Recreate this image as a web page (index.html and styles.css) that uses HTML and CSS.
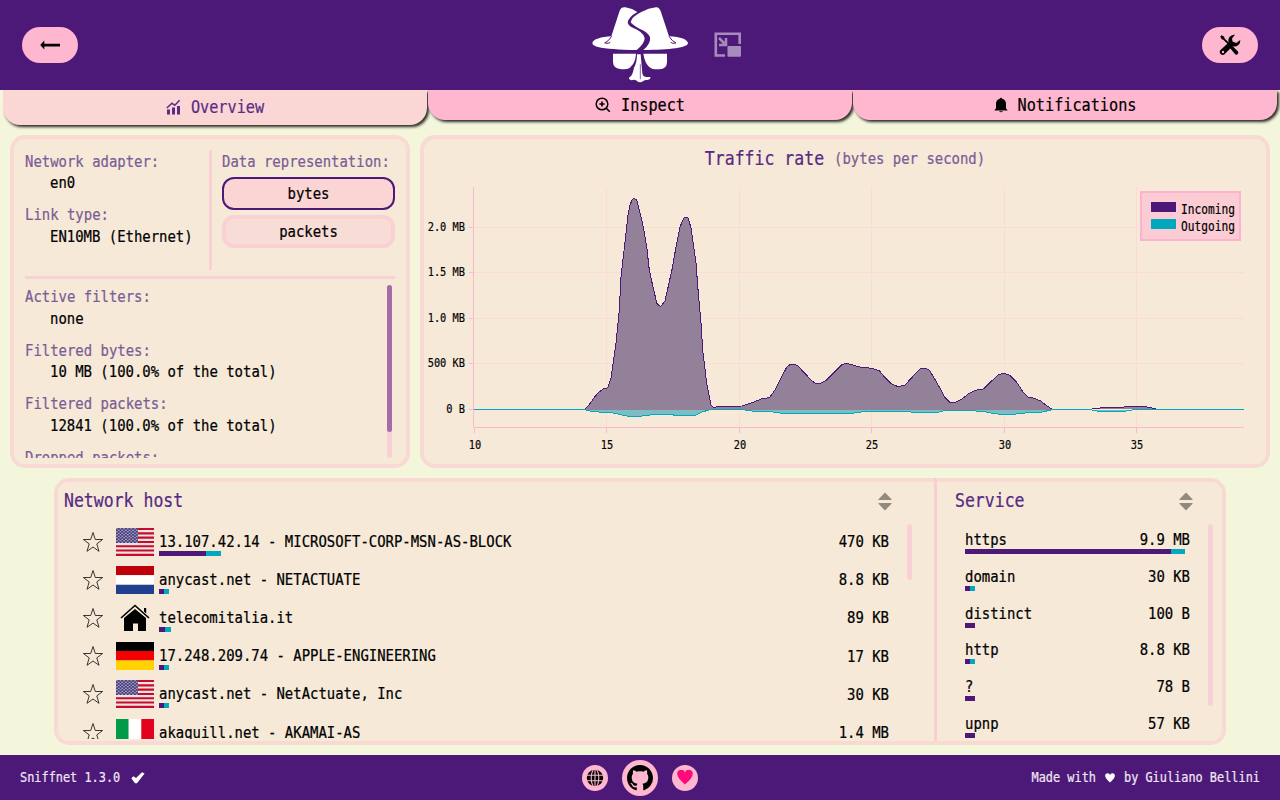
FILE: index.html
```html
<!DOCTYPE html>
<html lang="en">
<head>
<meta charset="utf-8">
<title>Sniffnet</title>
<link rel="stylesheet" href="styles.css">
</head>
<body>
<svg class="defs" width="0" height="0" aria-hidden="true">
  <defs>
    <pattern id="stars" width="3.6" height="3" patternUnits="userSpaceOnUse">
      <rect width="3.6" height="3" fill="#443a80"/>
      <circle cx="0.9" cy="0.8" r="0.75" fill="#c9c4cc"/>
      <circle cx="2.7" cy="2.3" r="0.75" fill="#c9c4cc"/>
    </pattern>
    <symbol id="us" viewBox="0 0 38 28">
      <rect width="38" height="28" fill="#ece6e2"/>
      <path stroke="#c90a2c" stroke-width="2.1" d="M0 1.05H38M0 5.35H38M0 9.65H38M0 13.95H38M0 18.25H38M0 22.55H38M0 26.9H38"/>
      <rect width="22" height="15" fill="url(#stars)"/>
    </symbol>
    <symbol id="star" viewBox="0 0 22 22">
      <path d="M11 1.5 13.3 8.5H20.6L14.8 12.9 17 20.3 11 16 5 20.3 7.2 12.9 1.4 8.5H8.7Z" fill="none" stroke="#222" stroke-width="0.9"/>
    </symbol>
    <symbol id="sort" viewBox="0 0 14 19">
      <path d="M7 .5 13.5 7.300V8H.5V7.300ZM7 18.500 13.500 11.700V11H.5V11.700Z" fill="#92897f"/>
    </symbol>
  </defs>
</svg>
<div class="app">
  <header class="header">
    <div class="pill">
      <svg width="22" height="12" viewBox="0 0 22 12"><path d="M1.2 6 5.3 1.6V4.7H21V7.5H5.3V10.4Z"/></svg>
    </div>
    <div class="brand">
      <svg class="logo" viewBox="90 20 300 235">
        <g fill="#fff">
          <path d="M97 132C97 120 125 112 154 111L179 34Q184 22 196 24Q218 28 232 38Q204 54 203 70Q206 80 220 86Q250 98 254 116Q254 132 230 152Q150 151 114 143Q97 139 97 132Z"/>
          <path d="M250 152Q274 132 270 114Q265 99 240 89Q216 76 212 68Q215 52 244 38Q266 26 288 24Q298 23 303 38L327 111C362 113 384 121 384 132C384 145 330 152 250 152Z"/>
          <path d="M159 163H228Q226 190 214 200Q208 210 193 210H184Q159 208 159 188Z"/>
          <path d="M250 163H321V188Q321 210 298 210H285Q257 207 250 163Z"/>
          <path d="M231 165H242L247 222Q249 235 263 233L271 233Q273 240 262 242Q254 241 249 246Q239 252 230 244Q223 239 215 243Q204 240 208 234Q218 230 222 205Q231 190 231 165Z"/>
        </g>
        <g fill="none" stroke="#4d1979">
          <path d="M155 111Q146 126 134 131Q146 134 151 129" stroke-width="3"/>
          <path d="M327 111Q336 126 348 131Q337 134 332 129" stroke-width="3"/>
          <path d="M241 195V240" stroke-width="2"/>
        </g>
      </svg>
      <svg class="pip" width="28" height="26" viewBox="0 0 28 26">
        <path d="M11 23.5H1.8V1.8H25.7V12" fill="none" stroke="#a68bbc" stroke-width="2.600"/>
        <path d="M5 6 10.500 11.500M12 6V13H5" fill="none" stroke="#a68bbc" stroke-width="2.500"/>
        <rect x="13.5" y="14" width="13.500" height="10.800" rx="1" fill="#a68bbc"/>
      </svg>
    </div>
    <div class="pill">
      <svg width="22" height="22" viewBox="0 0 22 22">
        <path d="M1.2 2.5 2.7 1.2 5.2 2.8 5.6 4.5 18.8 17.3A2 2 0 0 1 16.2 20.3L11 14 10.8 12 4.3 5.8 2.8 5.3Z"/>
        <path d="M16 .8A5.8 5.8 0 0 0 9.7 8.5L1.8 15.8A2.9 2.9 0 0 0 5.8 20.1L13.5 12.2A5.8 5.8 0 0 0 21.2 6L17.3 9 13.5 7.5 13 4.5Z"/>
        <circle cx="4" cy="18" r="1.2" fill="#ffb6cf"/>
      </svg>
    </div>
  </header>

  <nav class="tabs">
    <div class="tab active">
      <svg width="15" height="16" viewBox="0 0 15 16"><path d="M1 15.5V10.5H4V15.5ZM6 15.5V8.5H9V15.5ZM11 15.5V7H14V15.5Z" fill="#5a2d84"/><path d="M.8 9 6 4.3 8.8 6.3 13.6 1.2" fill="none" stroke="#5a2d84" stroke-width="1.5"/></svg>
      <span class="txt">Overview</span>
    </div>
    <div class="tab">
      <svg width="16" height="16" viewBox="0 0 16 16"><circle cx="7" cy="7" r="5.8" fill="none" stroke="#000" stroke-width="1.5"/><path d="M4.4 7H9.6M7 4.4V9.6M11 11 14.8 14.8" stroke="#000" stroke-width="1.6"/></svg>
      <span class="txt">Inspect</span>
    </div>
    <div class="tab">
      <svg width="14" height="16" viewBox="0 0 14 16"><path d="M7 .5 8.3 1.7C11 2.5 12 4.5 12 7V11.2L13.7 13.500H.3L2 11.2V7C2 4.500 3 2.500 5.700 1.700ZM5 14.300H9Q7 16.200 5 14.300Z"/></svg>
      <span class="txt">Notifications</span>
    </div>
  </nav>

  <main class="main">
    <div class="top-row">
      <section class="panel info">
        <div class="info-top">
          <dl class="facts adapter">
            <dt class="txt">Network adapter:</dt><dd class="txt">en0</dd>
            <dt class="txt">Link type:</dt><dd class="txt">EN10MB (Ethernet)</dd>
          </dl>
          <div class="repr">
            <div class="txt label">Data representation:</div>
            <div class="choice chosen"><span class="txt">bytes</span></div>
            <div class="choice"><span class="txt">packets</span></div>
          </div>
        </div>
        <div class="info-bottom">
          <dl class="facts">
            <dt class="txt">Active filters:</dt><dd class="txt">none</dd>
            <dt class="txt">Filtered bytes:</dt><dd class="txt">10 MB (100.0% of the total)</dd>
            <dt class="txt">Filtered packets:</dt><dd class="txt">12841 (100.0% of the total)</dd>
            <dt class="txt">Dropped packets:</dt>
          </dl>
          <div class="track"><div class="thumb"></div></div>
        </div>
      </section>

      <section class="panel chart">
        <div class="chart-title"><span class="txt title">Traffic rate</span><span class="txt label">(bytes per second)</span></div>
        <svg width="842" height="286" viewBox="424 178 842 286">
          <g stroke="#fadbd6" stroke-width="1" shape-rendering="crispEdges">
            <path d="M474 227.5H1244M474 272.500H1244M474 318.500H1244M474 363.500H1244M606.500 187V427M739.500 187V427M871.500 187V427M1004.500 187V427M1136.500 187V427"/>
          </g>
          <g stroke="#ffb6cf" stroke-width="1" shape-rendering="crispEdges">
            <path d="M473.500 187V427M474 427.500H1244M469 227.500H474M469 272.500H474M469 318.500H474M469 363.500H474M469 409.500H474M474.500 428V433M606.500 428V433M739.500 428V433M871.500 428V433M1004.500 428V433M1136.500 428V433"/>
          </g>
          <g class="area" shape-rendering="crispEdges">
            <path class="incoming" d="M584.300 409.500 588.300 405.700 595.700 395.700 599 392 603.300 389 607.700 387.700 611 378.300 616 343.300 619.300 310 621 276.700 626 233.300 628 215 630 205 632 200 634 198.300 636 199.500 637.300 201.700 642.300 221.700 646.700 246.700 649.300 270 653.300 288.300 657 303.700 660.700 306.700 665 301 672.300 268.300 676 246.700 680 226.700 684 217.700 687.700 217.300 691 227.700 696 263.300 698.300 293.300 701 323.300 702.700 350 706.700 383.300 711 405 713.300 407.300 724 406.300 741.700 406 753.300 402.300 761.700 398.700 769.300 397.700 775 390 781.700 376.700 786.700 367.300 789.500 365 792.700 364 797.700 365.700 803.300 371.700 811.700 380.700 815 383 819.300 383.700 826.700 380 835 371.700 841.700 364.700 846.700 363.300 860 367 871.700 368.300 879.300 370.700 885 377.700 891.700 384 898.300 386.700 905 385 913.300 376 920 369 925 368 929.300 370 934 377.700 940 388.300 945 397.700 950 402.300 955 402.300 961.700 399.300 968.300 394 975 390.300 983.300 389 991.700 381 998.300 374.700 1004.300 373.300 1010 375.300 1016.700 382.300 1023.300 392.300 1027.700 397 1033.300 398 1040.700 401 1046.700 405.700 1052.700 409.500"/>
            <path class="incoming" d="M1092 409 1100 408 1120 407.500 1128 406.500 1145 406.500 1156 408.800"/>
            <path class="outgoing" d="M474 409.500H584L593 411.700 612 412.700 622 415 630 416.500 638 416.500 650 415 672 414.500 675 415.500 695 415.500 703 411.700 711 409.500H741L757 411.700 773 412 783 413.500 850 413.500 863 411.700 910 411.700 913 412.600 937 412.600 945 410.600 970 410.600 985 411.700 992 413.300 1003 414.600 1012 414.500 1025 413 1040 412.500 1053 409.500H1090L1100 411.600 1123 411.600 1135 409.500H1244"/>
          </g>
          <g class="axis end">
            <text x="465" y="230.500">2.0 MB</text><text x="465" y="275.500">1.5 MB</text><text x="465" y="321.500">1.0 MB</text><text x="465" y="366.500">500 KB</text><text x="465" y="412.500">0 B</text>
          </g>
          <g class="axis mid">
            <text x="475" y="448.300">10</text><text x="607" y="448.300">15</text><text x="740" y="448.300">20</text><text x="872" y="448.300">25</text><text x="1005" y="448.300">30</text><text x="1137" y="448.300">35</text>
          </g>
          <rect x="1141" y="192" width="99" height="48" fill="#fbccd4" stroke="#ffb2cd" stroke-width="2"/>
          <rect x="1151" y="202" width="25" height="10" fill="#4d1979"/>
          <rect x="1151" y="219" width="25" height="10" fill="#02a9be"/>
          <g class="legend"><text x="1181" y="213.500">Incoming</text><text x="1181" y="230.500">Outgoing</text></g>
        </svg>
      </section>
    </div>

    <section class="panel lists">
      <div class="hosts">
        <div class="list-head"><span class="txt title">Network host</span><svg width="14" height="19"><use href="#sort"/></svg></div>
        <div class="list-body">
          <div class="rows">
            <div class="host"><svg class="star"><use href="#star"/></svg><svg class="flag"><use href="#us"/></svg>
              <div class="entry"><span class="txt">13.107.42.14 - MICROSOFT-CORP-MSN-AS-BLOCK</span><div class="bar"><i class="in" style="width:47px"></i><i class="out" style="width:15px"></i></div></div><span class="txt amount">470 KB</span></div>
            <div class="host"><svg class="star"><use href="#star"/></svg><svg class="flag" viewBox="0 0 38 28"><path fill="#be000d" d="M0 0H38V9.300H0Z"/><path fill="#fff" d="M0 9.300H38V18.700H0Z"/><path fill="#213f8f" d="M0 18.700H38V28H0Z"/></svg>
              <div class="entry"><span class="txt">anycast.net - NETACTUATE</span><div class="bar"><i class="in" style="width:5px"></i><i class="out" style="width:5px"></i></div></div><span class="txt amount">8.8 KB</span></div>
            <div class="host"><svg class="star"><use href="#star"/></svg><svg class="flag" viewBox="0 0 38 28"><path d="M8 14 19 5 30 14V27H22V19.500H17V27H8Z"/><path d="M5 14 19 1.500 33 14" fill="none" stroke="#000" stroke-width="1.600"/><path d="M28 4H30.200V9.500L28 7.500Z"/></svg>
              <div class="entry"><span class="txt">telecomitalia.it</span><div class="bar"><i class="in" style="width:6px"></i><i class="out" style="width:6px"></i></div></div><span class="txt amount">89 KB</span></div>
            <div class="host"><svg class="star"><use href="#star"/></svg><svg class="flag" viewBox="0 0 38 28"><path d="M0 0H38V9H0Z"/><path fill="#f50000" d="M0 9H38V18.500H0Z"/><path fill="#ffd200" d="M0 18.500H38V28H0Z"/></svg>
              <div class="entry"><span class="txt">17.248.209.74 - APPLE-ENGINEERING</span><div class="bar"><i class="in" style="width:5px"></i><i class="out" style="width:5px"></i></div></div><span class="txt amount">17 KB</span></div>
            <div class="host"><svg class="star"><use href="#star"/></svg><svg class="flag"><use href="#us"/></svg>
              <div class="entry"><span class="txt">anycast.net - NetActuate, Inc</span><div class="bar"><i class="in" style="width:5px"></i><i class="out" style="width:5px"></i></div></div><span class="txt amount">30 KB</span></div>
            <div class="host"><svg class="star"><use href="#star"/></svg><svg class="flag" viewBox="0 0 38 28"><path fill="#009b48" d="M0 0H12.700V28H0Z"/><path fill="#fff" d="M12.700 0H25.300V28H12.700Z"/><path fill="#e4001f" d="M25.300 0H38V28H25.300Z"/></svg>
              <div class="entry"><span class="txt">akaquill.net - AKAMAI-AS</span><div class="bar"><i class="in" style="width:8px"></i><i class="out" style="width:5px"></i></div></div><span class="txt amount">1.4 MB</span></div>
          </div>
          <div class="scroll short"></div>
        </div>
      </div>
      <div class="divider"></div>
      <div class="services">
        <div class="list-head"><span class="txt title">Service</span><svg width="14" height="19"><use href="#sort"/></svg></div>
        <div class="list-body">
          <div class="rows">
            <div class="service"><div class="pair"><span class="txt">https</span><span class="txt">9.9 MB</span></div><div class="bar"><i class="in" style="width:206px"></i><i class="out" style="width:14px"></i></div></div>
            <div class="service"><div class="pair"><span class="txt">domain</span><span class="txt">30 KB</span></div><div class="bar"><i class="in" style="width:5px"></i><i class="out" style="width:5px"></i></div></div>
            <div class="service"><div class="pair"><span class="txt">distinct</span><span class="txt">100 B</span></div><div class="bar"><i class="in" style="width:10px"></i></div></div>
            <div class="service"><div class="pair"><span class="txt">http</span><span class="txt">8.8 KB</span></div><div class="bar"><i class="in" style="width:5px"></i><i class="out" style="width:5px"></i></div></div>
            <div class="service"><div class="pair"><span class="txt">?</span><span class="txt">78 B</span></div><div class="bar"><i class="in" style="width:10px"></i></div></div>
            <div class="service"><div class="pair"><span class="txt">upnp</span><span class="txt">57 KB</span></div><div class="bar"><i class="in" style="width:10px"></i></div></div>
          </div>
          <div class="scroll long"></div>
        </div>
      </div>
    </section>
  </main>

  <footer class="footer">
    <div class="foot-side"><span class="txt">Sniffnet 1.3.0</span>
      <svg class="check" width="14" height="12" viewBox="0 0 14 12"><path d="M.3 6.300 2.500 4.300 5 6 11 .3 13.600 1.500 6 11.200H4Z" fill="#fff"/></svg></div>
    <div class="social">
      <div class="round"><svg width="18" height="18" viewBox="0 0 18 18"><circle cx="9" cy="9" r="8.200"/><g fill="none" stroke="#ffb6cf" stroke-width="1.100"><ellipse cx="9" cy="9" rx="3.800" ry="9"/><path d="M9 0V18M0 6.200H18M0 11.800H18"/></g></svg></div>
      <div class="round big"><svg width="26" height="26" viewBox="0 0 16 16"><path d="M8 0C3.580 0 0 3.580 0 8c0 3.540 2.290 6.530 5.470 7.590.4.070.55-.17.55-.38 0-.19-.01-.82-.01-1.490-2.010.37-2.530-.49-2.690-.94-.09-.23-.48-.94-.82-1.130-.28-.15-.68-.52-.01-.53.63-.01 1.080.58 1.230.82.72 1.210 1.870.87 2.330.66.07-.52.28-.87.51-1.070-1.780-.2-3.640-.89-3.640-3.950 0-.87.31-1.590.82-2.150-.08-.2-.36-1.020.08-2.120 0 0 .67-.21 2.200.82.64-.18 1.320-.27 2-.27s1.360.09 2 .27c1.530-1.040 2.200-.82 2.200-.82.44 1.100.16 1.920.08 2.120.51.56.82 1.270.82 2.150 0 3.070-1.870 3.750-3.650 3.950.29.25.54.73.54 1.480 0 1.070-.01 1.930-.01 2.200 0 .21.150.46.550.38A8.010 8.010 0 0 0 16 8c0-4.420-3.580-8-8-8Z"/></svg></div>
      <div class="round"><svg width="16" height="15" viewBox="0 0 16 15"><path d="M8 14.500Q.3 8 .3 4.300A3.900 3.900 0 0 1 8 3 3.900 3.900 0 0 1 15.700 4.300Q15.700 8 8 14.500Z" fill="#ff0a7b"/></svg></div>
    </div>
    <div class="foot-side right"><span class="txt">Made with</span><svg width="10" height="10" viewBox="0 0 16 15"><path d="M8 14.500Q.3 8 .3 4.300A3.900 3.900 0 0 1 8 3 3.900 3.900 0 0 1 15.700 4.300Q15.700 8 8 14.500Z" fill="#fff"/></svg><span class="txt">by Giuliano Bellini</span></div>
  </footer>
</div>
</body>
</html>
```
FILE: styles.css
```css
* { box-sizing: border-box; }
body { margin: 0; }
.defs { position: absolute; }
.app {
  width: 1280px; height: 800px; overflow: hidden;
  display: flex; flex-direction: column;
  background: #f4f6dc; color: #000;
  font: 13.95px/21.5px "DejaVu Sans Mono", monospace;
}
/* narrow, tall letterforms */
.txt { display: block; transform: scaleY(1.18); white-space: pre; -webkit-text-stroke: .2px currentColor; }

.header { height: 90px; flex: none; background: #4d1979; display: grid; grid-template-columns: 1fr auto 1fr; align-items: center; padding: 0 22px; }
.pill { width: 56px; height: 36px; border-radius: 18px; background: #ffb6cf; display: flex; align-items: center; justify-content: center; }
.pill:last-child { justify-self: end; }
.brand { display: flex; align-items: center; gap: 24px; padding-left: 52px; }
.logo { width: 100px; height: 78.3px; margin-top: 1px; }

.tabs { display: flex; gap: 1px; padding: 0 3px; height: 35px; flex: none; align-items: flex-start; }
.tab { flex: 1; height: 30px; border-radius: 0 0 17px 17px; background: #ffb6cf; box-shadow: 2px 2px 3px #2a2a24; clip-path: inset(0 -4px -6px 0); display: flex; align-items: center; justify-content: center; gap: 10px; font-size: 15.2px; }
.tab .txt { padding-top: 1px; }
.tab.active { height: 35px; background: #fad6d4; color: #5a2d84; }
.tab.active svg { margin-bottom: 2px; }

.main { flex: 1; padding: 10px; display: flex; flex-direction: column; gap: 10px; }
.top-row { display: flex; gap: 10px; height: 333px; }
.panel { border: 4px solid #f9d9d4; border-radius: 15px; background: #f6e9d8; }
.label, dt { color: #7a5d95; }
.title { color: #562a82; font-size: 16.5px; }

.info { width: 400px; padding: 11px 11px 0; display: flex; flex-direction: column; }
.info-top { display: flex; height: 120px; flex: none; }
.facts { margin: 0; }
.facts dd { margin: 0 0 10.6px 25px; }
.adapter { width: 187px; padding-top: .5px; border-right: 3px solid #f9d1d4; }
.repr { margin-left: 10px; width: 173px; display: flex; flex-direction: column; }
.repr .label { padding-top: 1px; margin-bottom: 4.5px; }
.choice { height: 33px; margin-bottom: 5px; border: 4px solid #f9d1d4; border-radius: 12px; background: #f8ddd6; display: flex; align-items: center; justify-content: center; }
.choice .txt { padding-top: 1px; }
.chosen { border: 2px solid #4d1979; background: #fad5d4; }
.info-bottom { margin-top: 6px; border-top: 3px solid #f9d1d4; padding: 6px 3px 0 0; display: flex; justify-content: space-between; height: 182px; flex: none; }
.info-bottom .facts { overflow: hidden; width: 330px; padding-top: 1px; }
.track { width: 5px; border-radius: 3px; background: #f9d1d4; }
.thumb { height: 147px; border-radius: 3px; background: #a56ca8; }

.chart { flex: 1; }
.chart svg { display: block; }
.chart-title { height: 39px; display: flex; justify-content: center; align-items: center; gap: 10px; }
.area path { stroke-width: 1; }
.incoming { fill: rgba(141, 122, 150, .95); stroke: #4d1979; }
.outgoing { fill: rgba(122, 186, 195, .97); stroke: #02a9be; }
.chart text { transform-box: fill-box; transform-origin: center; transform: scaleY(1.18); stroke: #000; stroke-width: .15px; }
.axis { font-size: 10.35px; }
.end { text-anchor: end; }
.mid { text-anchor: middle; }
.legend { font-size: 11.2px; }

.lists { margin: 0 44px; height: 267px; display: flex; }
.hosts { width: 876px; }
.list-head { height: 41px; display: flex; align-items: center; justify-content: space-between; padding: 0 42px 3px 6px; }
.list-body { height: 216px; overflow: hidden; display: flex; align-items: flex-start; }
.rows { flex: none; }
.hosts .rows { width: 831px; padding-left: 23.5px; }
.host { height: 38.1px; display: flex; align-items: center; }
.star { width: 22px; height: 22px; margin-right: 12.5px; }
.flag { width: 38px; height: 28px; margin-right: 5px; }
.entry { flex: 1; height: 28px; padding-top: 4px; line-height: 19px; }
.bar { display: flex; height: 5px; }
.in { background: #4d1979; }
.out { background: #02a9be; }
.scroll { width: 5px; margin: 1px 0 0 18px; border-radius: 3px; background: #f9d1d4; }
.short { height: 56px; }
.long { height: 182px; }
.divider { width: 3px; height: 263px; margin-top: -4px; background: #f9cdd4; }
.services { width: 285px; }
.services .list-head { padding: 0 29px 3px 18px; }
.services .rows { padding: 7px 0 0 28px; width: 253px; }
.service { height: 36.8px; }
.pair { display: flex; justify-content: space-between; line-height: 19px; }

.footer { height: 45px; flex: none; background: #4d1979; color: #eee6f3; display: grid; grid-template-columns: 1fr auto 1fr; align-items: center; padding: 0 20px; font-size: 11.9px; }
.foot-side { display: flex; align-items: center; gap: 11px; }
.right { justify-content: flex-end; gap: 9px; }
.social { display: flex; align-items: center; gap: 14px; }
.round { width: 26px; height: 26px; border-radius: 50%; background: #ffb6cf; display: flex; align-items: center; justify-content: center; }
.big { width: 36px; height: 36px; }
```
